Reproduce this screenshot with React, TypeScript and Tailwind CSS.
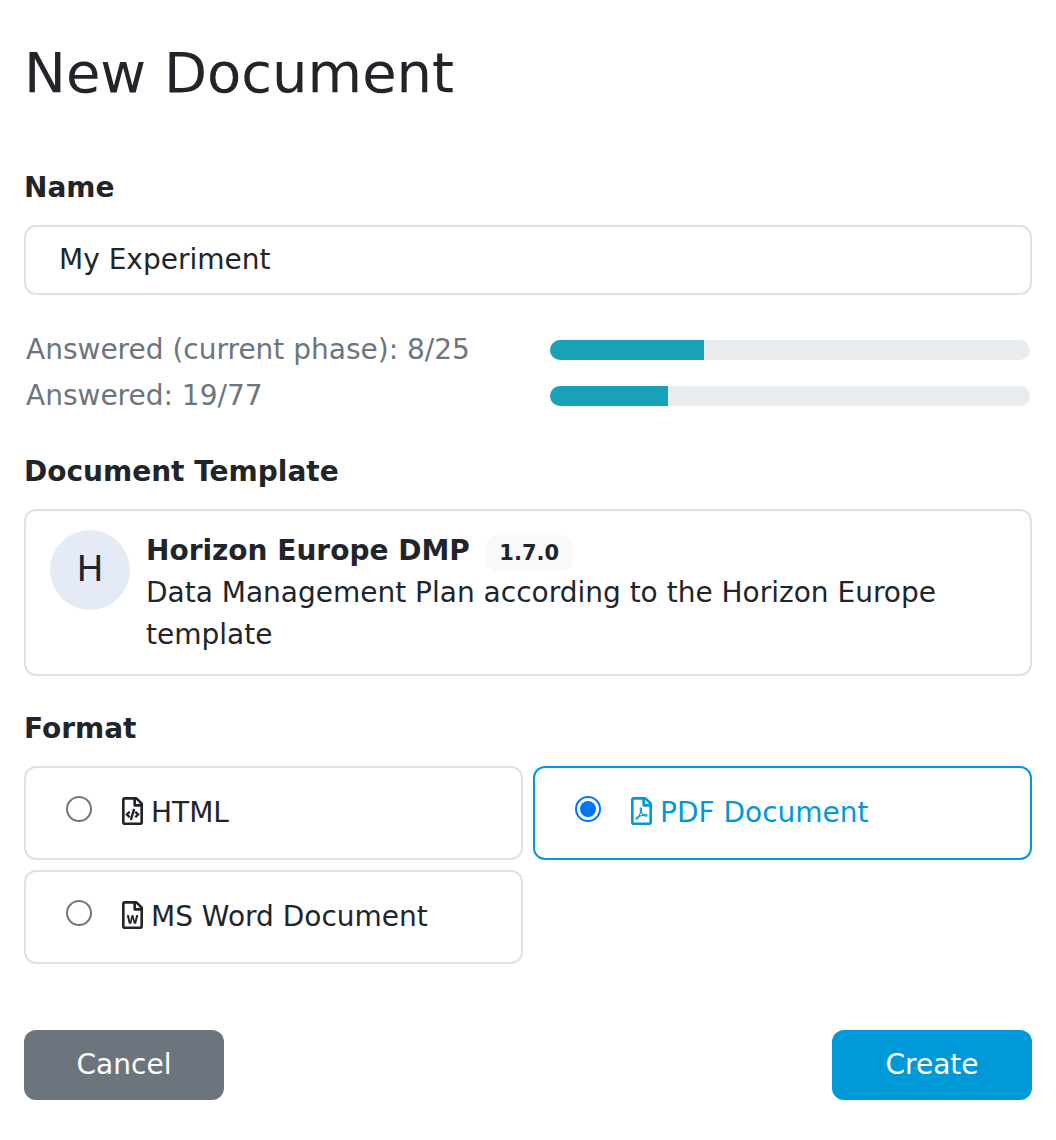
import React from "react";
import { FaRegFileCode, FaRegFilePdf, FaRegFileWord } from "react-icons/fa";

function Progress({ label, percent }: { label: string; percent: number }) {
  return (
    <div className="flex h-[46px] items-center px-[2px] text-[#6c757d]">
      <span className="w-[524px] shrink-0">{label}</span>
      <div className="h-5 w-[480px] overflow-hidden rounded-full bg-[#e9ecef]">
        <div className="h-full bg-[#17a2b8]" style={{ width: `${percent}%` }} />
      </div>
    </div>
  );
}

function Format({ label, icon, selected = false }: { label: string; icon: React.ReactNode; selected?: boolean }) {
  return (
    <label
      className={`flex h-[94px] items-center rounded-xl border-2 pl-10 ${
        selected ? "border-[#0099d8] text-[#0099d8]" : "border-[#dee2e6] text-[#212529]"
      }`}
    >
      <span
        className={`mb-2 flex h-[26px] w-[26px] items-center justify-center rounded-full border-2 ${
          selected ? "border-[#0075ff]" : "border-[#767676]"
        }`}
      >
        {selected && <span className="h-[15.6px] w-[15.6px] rounded-full bg-[#0075ff]" />}
      </span>
      <span className="mb-[3.4px] ml-[30px] mr-2">{icon}</span>
      <span>{label}</span>
    </label>
  );
}

export default function App() {
  return (
    <main className="h-[1140px] w-[1056px] bg-white px-6 pt-[39px] font-['DejaVu_Sans',sans-serif] text-[28px] leading-[42px] text-[#212529]">
      <h1 className="text-[56px] leading-[67px]">New Document</h1>
      <h2 className="mt-[61px] font-bold">Name</h2>
      <div className="mt-4 flex h-[70px] items-center rounded-xl border-2 border-[#dee2e6] px-[33px]">My Experiment</div>
      <div className="mt-8">
        <Progress label="Answered (current phase): 8/25" percent={32} />
        <Progress label="Answered: 19/77" percent={24.6} />
      </div>
      <h2 className="mt-8 font-bold">Document Template</h2>
      <section className="mt-4 flex h-[167px] rounded-xl border-2 border-[#dee2e6] px-6 pt-[19px]">
        <div className="mr-4 flex h-20 w-20 shrink-0 items-center justify-center rounded-full bg-[#e4eaf6] pb-0.5 text-[36px]">H</div>
        <div>
          <div className="flex h-[42px] items-center font-bold">
            Horizon Europe DMP
            <span className="ml-4 mt-1 flex h-9 items-center rounded-xl bg-[#f8f9fa] px-[13.5px] text-[21px] leading-[21px]">1.7.0</span>
          </div>
          <p>Data Management Plan according to the Horizon Europe template</p>
        </div>
      </section>
      <h2 className="mt-8 font-bold">Format</h2>
      <div className="mt-4 grid grid-cols-2 gap-[10px]">
        <Format label="HTML" icon={<FaRegFileCode className="h-7 w-[21px]" />} />
        <Format label="PDF Document" icon={<FaRegFilePdf className="h-7 w-[21px]" />} selected />
        <Format label="MS Word Document" icon={<FaRegFileWord className="h-7 w-[21px]" />} />
      </div>
      <div className="mt-[66px] flex justify-between text-white">
        <button className="h-[70px] w-[200px] rounded-xl bg-[#6c757d]">Cancel</button>
        <button className="h-[70px] w-[200px] rounded-xl bg-[#0099d8]">Create</button>
      </div>
    </main>
  );
}
